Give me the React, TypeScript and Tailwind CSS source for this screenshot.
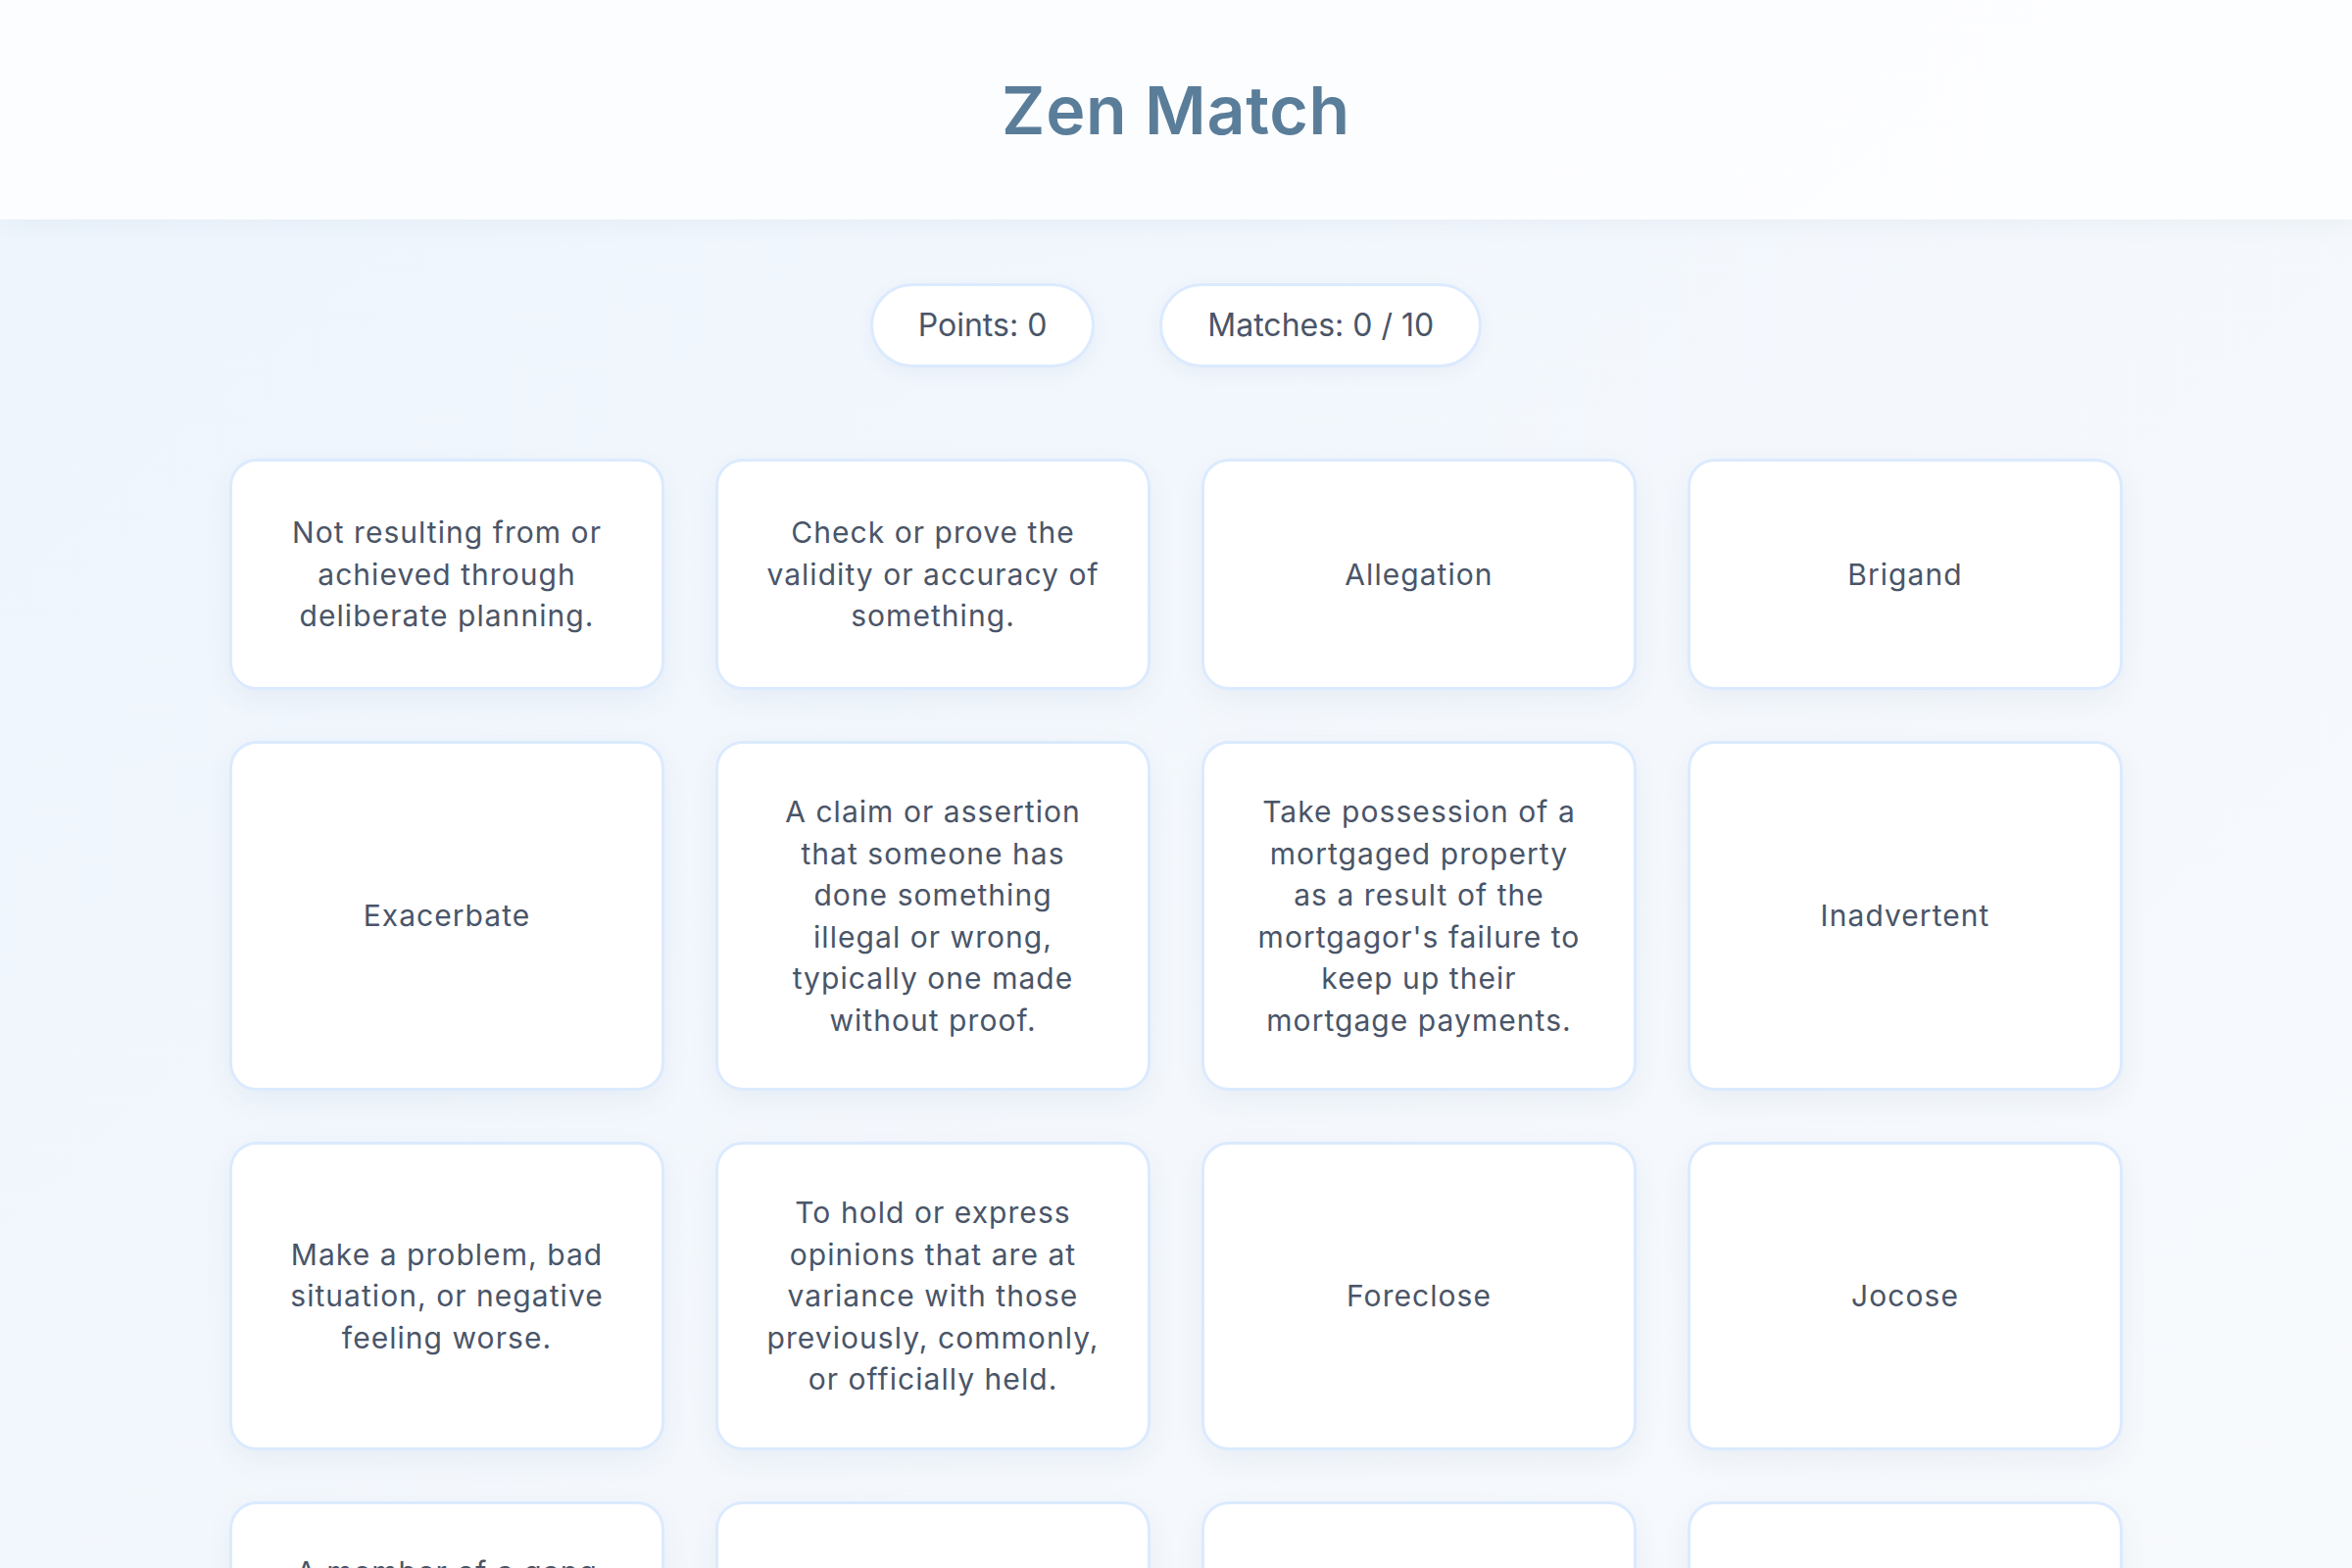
import { FC } from 'react';

type Card = { id: number; text: string };

// Shuffled deck as it appears on the board (word + definition pairs)
const cards: Card[] = [
  { id: 1, text: 'Not resulting from or achieved through deliberate planning.' },
  { id: 2, text: 'Check or prove the validity or accuracy of something.' },
  { id: 3, text: 'Allegation' },
  { id: 4, text: 'Brigand' },
  { id: 5, text: 'Exacerbate' },
  { id: 6, text: 'A claim or assertion that someone has done something illegal or wrong, typically one made without proof.' },
  { id: 7, text: "Take possession of a mortgaged property as a result of the mortgagor's failure to keep up their mortgage payments." },
  { id: 8, text: 'Inadvertent' },
  { id: 9, text: 'Make a problem, bad situation, or negative feeling worse.' },
  { id: 10, text: 'To hold or express opinions that are at variance with those previously, commonly, or officially held.' },
  { id: 11, text: 'Foreclose' },
  { id: 12, text: 'Jocose' },
  { id: 13, text: 'A member of a gang that ambushes and robs people in forests and mountains.' },
  { id: 14, text: 'Verify' },
  { id: 15, text: 'Dissent' },
  { id: 16, text: 'Playing or given to playing jokes.' },
  { id: 17, text: 'Ephemeral' },
  { id: 18, text: 'Lasting for a very short time.' },
  { id: 19, text: 'Candor' },
  { id: 20, text: 'The quality of being open and honest in expression.' },
];

const Stat: FC<{ label: string }> = ({ label }) => (
  <div className="rounded-full border-[3px] border-[#dbeafe] bg-white px-[46px] py-4 text-[32px] leading-[48px] text-[#4a5568] shadow-[0_6px_20px_rgba(30,64,110,0.05)]">
    {label}
  </div>
);

const MatchCard: FC<{ card: Card }> = ({ card }) => (
  <button className="flex min-h-[236px] items-center justify-center rounded-[28px] border-[3px] border-[#dbeafe] bg-white px-[48.75px] py-12 text-center text-[30px] leading-[42.5px] tracking-[0.035em] text-[#4a5568] shadow-[0_10px_30px_rgba(30,64,110,0.06)]">
    {card.text}
  </button>
);

export default function App() {
  return (
    <div className="min-h-screen bg-gradient-to-br from-[#eef5fd] via-[#f4f8fd] to-[#f8fafc] font-['Inter','Noto_Sans',sans-serif]">
      {/* Header */}
      <header className="bg-white/80 py-16 text-center shadow-[0_4px_24px_rgba(30,64,110,0.06)]">
        <h1 className="text-[68px] font-semibold leading-[96px] tracking-[0.01em] text-[#5a7d9a]">Zen Match</h1>
      </header>

      {/* Score */}
      <div className="mt-[65px] flex justify-center gap-[66px]">
        <Stat label="Points: 0" />
        <Stat label="Matches: 0 / 10" />
      </div>

      {/* Board */}
      <main className="mx-auto mt-[93px] grid w-[1932px] grid-cols-4 gap-[52px] pb-24">
        {cards.map((card) => (
          <MatchCard key={card.id} card={card} />
        ))}
      </main>
    </div>
  );
}
